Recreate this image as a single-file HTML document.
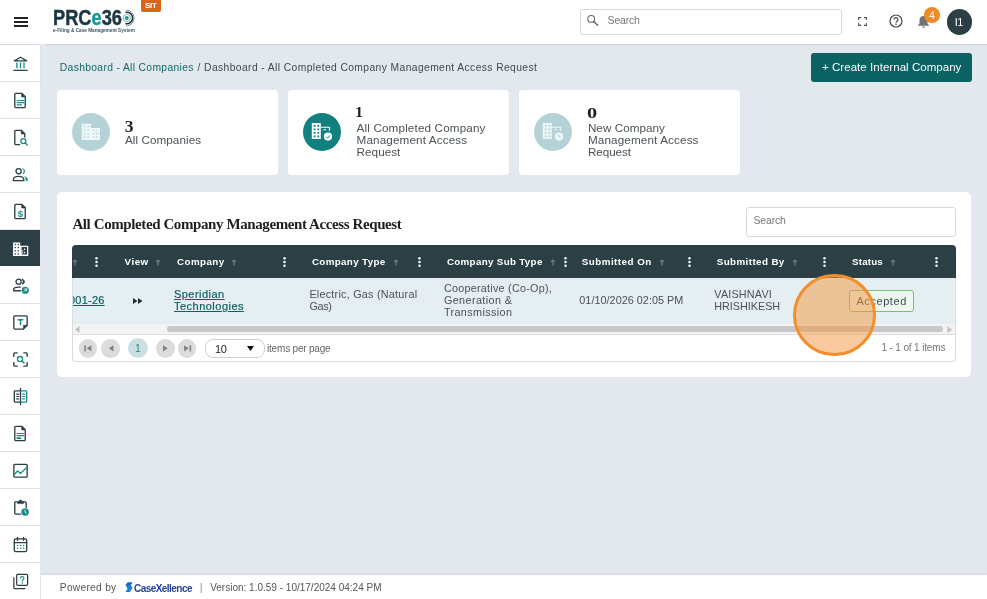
<!DOCTYPE html>
<html lang="en">
<head>
<meta charset="utf-8">
<title>Dashboard - All Completed Company Management Access Request</title>
<style>
*{box-sizing:border-box;margin:0;padding:0}
body{will-change:transform}
html,body{width:987px;height:599px;overflow:hidden;background:#e3e8ef;font-family:"Liberation Sans",Arial,sans-serif;color:#3d4a4f}
.abs{position:absolute}
.t{position:absolute;white-space:nowrap;line-height:1}
#topbar{position:absolute;left:0;top:0;width:987px;height:44px;background:#fff;box-shadow:0 1px 1px rgba(100,115,130,.18)}
#side{position:absolute;left:0;top:44px;width:40px;height:556px;background:#fff;border-top:1px solid #d4d7d9}
#strip{position:absolute;left:40px;top:44px;width:5px;height:45px;background:linear-gradient(90deg,#dfe4eb,#e9edf2)}
#side .it{position:absolute;left:0;width:40px;height:37px;border-bottom:1px solid #dfe3e6}
#side .it.act{background:#2c3f45;border-bottom:none;height:36px}
#side svg{position:absolute;left:10.5px;top:9px;width:19px;height:19px}
#footer{position:absolute;left:41px;top:575px;width:946px;height:24px;background:#fff;box-shadow:0 -1px 2px rgba(100,115,130,.15)}
.card{position:absolute;top:90px;width:221px;height:84.5px;background:#fff;border-radius:4px}
.circ{position:absolute;left:15px;top:22.5px;width:38px;height:38px;border-radius:50%}
.num{font-family:"Liberation Serif","DejaVu Serif",serif;font-weight:bold;color:#1f1f1f}
#panel{position:absolute;left:57px;top:192px;width:914px;height:185px;background:#fff;border-radius:5px}
#grid{position:absolute;left:72px;top:244.5px;width:883.5px;height:117px;border-radius:4px;overflow:hidden;background:#fff}
#gborder{position:absolute;left:72px;top:278px;width:883.5px;height:83.5px;border:1px solid #d8dde0;border-top:none;border-radius:0 0 4px 4px}
#ghead{position:absolute;left:0;top:0;width:884px;height:33.5px;background:#2c3f45}
#grow{position:absolute;left:0;top:33.5px;width:884px;height:45.5px;background:#e5eef1}
.hd{color:#fff;font-weight:bold;font-size:10px;letter-spacing:.22px}
.cell{font-size:11.5px;color:#4a5458}
a{color:inherit}
</style>
</head>
<body>
<div id="topbar">
<div class="abs" style="left:14px;top:17px;width:14px;height:2px;background:#222"></div>
<div class="abs" style="left:14px;top:21px;width:14px;height:2px;background:#222"></div>
<div class="abs" style="left:14px;top:25px;width:14px;height:2px;background:#222"></div>
<span class="t m" id="logo" style="left:52.700px;top:7.200px;font-size:21.600px;font-weight:bold;letter-spacing:0;color:#1b3640;-webkit-text-stroke:.45px #1b3640;transform:scaleX(0.845);transform-origin:0 0">PRC<span style="color:#1a9a96;-webkit-text-stroke:.45px #1a9a96">e</span>36</span>
<svg class="abs" style="left:117.800px;top:8.800px" width="18" height="18" viewBox="0 0 18 18"><path d="M8.100 1A8 8 0 0 1 8.100 17" fill="none" stroke="#5d737a" stroke-width=".8"/><path d="M7.300 3.400A5.800 5.800 0 1 1 7.300 14.600" fill="none" stroke="#1b3640" stroke-width="1.500"/><circle cx="8.800" cy="9" r="3.600" fill="none" stroke="#6d8187" stroke-width=".7"/><circle cx="8.800" cy="9" r="2" fill="#1a9a96"/></svg>
<span class="t m" id="logosub" style="left:53px;top:29px;font-size:4.7px;font-weight:bold;color:#3a5662">e-Filing &amp; Case Management System</span>
<div class="abs" style="left:141px;top:0;width:20px;height:11.500px;background:#d9651d;border-radius:0 0 2px 2px"></div>
<span class="t m" id="sit" style="left:145px;top:1.5px;font-size:8px;font-weight:bold;color:#fff;letter-spacing:-0.3px">SIT</span>
<div class="abs" style="left:580px;top:9px;width:262px;height:25.500px;border:1px solid #d8d8d8;border-radius:3px;background:#fff"></div>
<svg class="abs" style="left:586px;top:14px" width="13" height="13" viewBox="0 0 13 13"><circle cx="5.200" cy="4.900" r="3.400" fill="none" stroke="#666" stroke-width="1.100"/><path d="M7.700 7.500L11.700 11.300" stroke="#666" stroke-width="1.400" stroke-linecap="round"/></svg>
<span class="t m " id="srch1" style="left:607.60px;top:15.00px;font-size:10.5px;letter-spacing:-0.214px;color:#777">Search</span>
<svg class="abs" style="left:858px;top:17px" width="9" height="9" viewBox="0 0 9 9"><path d="M.6 3V.6H3M6 .6H8.400V3M8.400 6V8.400H6M3 8.400H.6V6" fill="none" stroke="#555" stroke-width="1.100"/></svg>
<svg class="abs" style="left:889px;top:13.500px" width="14" height="14" viewBox="0 0 14 14"><circle cx="7" cy="7" r="6" fill="none" stroke="#444" stroke-width="1.200"/><path d="M5 5.600a2 2 0 1 1 3 1.700c-.7.400-1 .800-1 1.500" fill="none" stroke="#444" stroke-width="1.200"/><circle cx="7" cy="10.300" r=".8" fill="#444"/></svg>
<svg class="abs" style="left:917px;top:15px" width="13" height="14" viewBox="0 0 13 14"><path d="M6.500 1c-2.500 0-4 1.900-4 4.200v3.300l-1.500 1.700v.6h11v-.6l-1.500-1.700v-3.300c0-2.300-1.500-4.200-4-4.200z" fill="#70757a"/><path d="M5.200 11.600a1.300 1.300 0 0 0 2.600 0z" fill="#70757a"/></svg>
<div class="abs" style="left:924.400px;top:7px;width:16px;height:16px;border-radius:50%;background:#f08a24"></div>
<span class="t m " id="bn" style="left:929.30px;top:11.00px;font-size:10px;letter-spacing:-0.062px;color:#fff">4</span>
<div class="abs" style="left:946.500px;top:9px;width:25.500px;height:25.500px;border-radius:50%;background:#2c3f45"></div>
<span class="t m " id="av" style="left:954.80px;top:17.00px;font-size:11px;letter-spacing:-0.594px;color:#fff">I1</span>
</div>
<div id="strip"></div>
<div id="side">
<div class="it" style="top:0px"><svg viewBox="0 0 20 20" fill="none" stroke-linecap="round" stroke-linejoin="round"><path d="M3.500 7.200L10 3.500l6.500 3.700z" stroke="#2c3f45" stroke-width="1.300"/><path d="M6.300 9.500v5M10 9.500v5M13.700 9.500v5" stroke="#1a8a86" stroke-width="1.400"/><path d="M3 17.200h14" stroke="#2c3f45" stroke-width="1.400"/></svg></div>
<div class="it" style="top:37px"><svg viewBox="0 0 20 20" fill="none" stroke-linecap="round" stroke-linejoin="round"><path d="M5 2.500h6.500l3.500 3.500v10.500a1 1 0 0 1-1 1h-9a1 1 0 0 1-1-1v-13a1 1 0 0 1 1-1z" stroke="#2c3f45" stroke-width="1.400"/><path d="M11.300 2.700v3.500h3.500z" fill="#2c3f45" stroke="#2c3f45" stroke-width=".8"/><path d="M6.500 10h7M6.500 12.300h7M6.500 14.600h4.500" stroke="#1a8a86" stroke-width="1.300"/></svg></div>
<div class="it" style="top:74px"><svg viewBox="0 0 20 20" fill="none" stroke-linecap="round" stroke-linejoin="round"><path d="M9 17.500h-4a1 1 0 0 1-1-1v-13a1 1 0 0 1 1-1h6l3.500 3.500v3.500" stroke="#2c3f45" stroke-width="1.400"/><path d="M10.800 2.700v3.500h3.500z" fill="#2c3f45" stroke="#2c3f45" stroke-width=".8"/><circle cx="13" cy="13.800" r="2.600" stroke="#1a8a86" stroke-width="1.400"/><path d="M15 15.800l2 2" stroke="#1a8a86" stroke-width="1.500"/></svg></div>
<div class="it" style="top:111px"><svg viewBox="0 0 20 20" fill="none" stroke-linecap="round" stroke-linejoin="round"><circle cx="8" cy="6.500" r="2.700" stroke="#2c3f45" stroke-width="1.400"/><path d="M2.500 16.500v-1.200c0-2 2.500-3.300 5.500-3.300s5.500 1.300 5.500 3.300v1.200z" stroke="#2c3f45" stroke-width="1.400"/><path d="M12.500 3.800a2.800 2.800 0 0 1 0 5.400a4 4 0 0 0 0-5.400zM14.800 12.300c1.600.6 2.700 1.600 2.700 3v1.200h-1.800v-1.200c0-1.200-.4-2.200-.9-3z" fill="#1a8a86" stroke="#1a8a86" stroke-width=".5"/></svg></div>
<div class="it" style="top:148px"><svg viewBox="0 0 20 20" fill="none" stroke-linecap="round" stroke-linejoin="round"><path d="M5 2.500h6.500l3.500 3.500v10.500a1 1 0 0 1-1 1h-9a1 1 0 0 1-1-1v-13a1 1 0 0 1 1-1z" stroke="#2c3f45" stroke-width="1.400"/><path d="M11.300 2.700v3.500h3.500z" fill="#2c3f45" stroke="#2c3f45" stroke-width=".8"/><text x="9.800" y="15.800" font-family="Liberation Sans,sans-serif" font-size="10" font-weight="bold" fill="#1a8a86" text-anchor="middle">$</text></svg></div>
<div class="it act" style="top:185px"><svg viewBox="0 0 20 20" fill="none" stroke-linecap="round" stroke-linejoin="round"><path d="M2.200 3.700h7.500v3.500h8.500v10.700H2.200z" fill="#fff"/><path d="M11.100 8.500h5.800v7.800h-5.800z" fill="#2c3f45"/><rect x="3.8" y="5.1" width="1.400" height="1.400" fill="#2c3f45"/><rect x="3.8" y="8.3" width="1.400" height="1.400" fill="#2c3f45"/><rect x="3.8" y="11.7" width="1.400" height="1.400" fill="#2c3f45"/><rect x="3.8" y="15.1" width="1.400" height="1.400" fill="#2c3f45"/><rect x="7.0" y="5.1" width="1.400" height="1.400" fill="#2c3f45"/><rect x="7.0" y="8.3" width="1.400" height="1.400" fill="#2c3f45"/><rect x="7.0" y="11.7" width="1.400" height="1.400" fill="#2c3f45"/><rect x="7.0" y="15.1" width="1.400" height="1.400" fill="#2c3f45"/><rect x="13.600" y="10.100" width="1.400" height="1.400" fill="#fff"/><rect x="13.600" y="13.500" width="1.400" height="1.400" fill="#fff"/><path d="M9.700 12.400h3.200M9.700 14.700h3.200" stroke="#fff" stroke-width="1" stroke-linecap="butt"/></svg></div>
<div class="it" style="top:222px"><svg viewBox="0 0 20 20" fill="none" stroke-linecap="round" stroke-linejoin="round"><circle cx="8" cy="6" r="2.700" stroke="#2c3f45" stroke-width="1.400"/><path d="M12 3.300a2.800 2.800 0 0 1 0 5.400a4.500 4.500 0 0 0 0-5.400z" fill="#2c3f45" stroke="#2c3f45" stroke-width="1"/><path d="M10 15.500H2.800v-1c0-1.700 2.200-2.800 5.200-2.800c.6 0 1.200 0 1.700.100" stroke="#2c3f45" stroke-width="1.400"/><circle cx="15" cy="15" r="3.800" fill="#1a8a86"/><path d="M13.600 16.400l2.700-2.700m-1.800-.1h1.900v1.900" stroke="#fff" stroke-width=".9"/></svg></div>
<div class="it" style="top:259px"><svg viewBox="0 0 20 20" fill="none" stroke-linecap="round" stroke-linejoin="round"><path d="M4 3h12a1 1 0 0 1 1 1v9l-4 4H4a1 1 0 0 1-1-1V4a1 1 0 0 1 1-1z" stroke="#2c3f45" stroke-width="1.400"/><path d="M17 13h-4v4z" fill="#2c3f45" stroke="#2c3f45" stroke-width=".6"/><path d="M7 7h6M10 7v6" stroke="#1a8a86" stroke-width="1.600" stroke-linecap="butt"/></svg></div>
<div class="it" style="top:296px"><svg viewBox="0 0 20 20" fill="none" stroke-linecap="round" stroke-linejoin="round"><path d="M3 6.500V4a1 1 0 0 1 1-1h2.500M13.500 3H16a1 1 0 0 1 1 1v2.500M17 13.500V16a1 1 0 0 1-1 1h-2.500M6.500 17H4a1 1 0 0 1-1-1v-2.500" stroke="#2c3f45" stroke-width="1.500"/><circle cx="9.500" cy="9.500" r="2.700" stroke="#1a8a86" stroke-width="1.400"/><path d="M11.600 11.600l2.200 2.200" stroke="#1a8a86" stroke-width="1.500"/></svg></div>
<div class="it" style="top:333px"><svg viewBox="0 0 20 20" fill="none" stroke-linecap="round" stroke-linejoin="round"><path d="M10 1.500v17" stroke="#2c3f45" stroke-width="1.400"/><path d="M10 4H4.500a1 1 0 0 0-1 1v10a1 1 0 0 0 1 1H10" stroke="#2c3f45" stroke-width="1.400"/><path d="M6 7.500h2M6 10h2M6 12.500h2" stroke="#2c3f45" stroke-width="1.200"/><path d="M10 4h5.500a1 1 0 0 1 1 1v10a1 1 0 0 1-1 1H10" stroke="#1a8a86" stroke-width="1.400"/><path d="M12.300 7.500h2M12.300 10h2M12.300 12.500h2" stroke="#1a8a86" stroke-width="1.200"/></svg></div>
<div class="it" style="top:370px"><svg viewBox="0 0 20 20" fill="none" stroke-linecap="round" stroke-linejoin="round"><path d="M5 2.500h6.500l3.500 3.500v10.500a1 1 0 0 1-1 1h-9a1 1 0 0 1-1-1v-13a1 1 0 0 1 1-1z" stroke="#2c3f45" stroke-width="1.400"/><path d="M11.300 2.700v3.500h3.500z" fill="#2c3f45" stroke="#2c3f45" stroke-width=".8"/><path d="M6.500 10h7M6.500 12.300h7" stroke="#1a8a86" stroke-width="1.300"/><path d="M6.500 14.800h3.500" stroke="#1a8a86" stroke-width="1.800"/></svg></div>
<div class="it" style="top:407px"><svg viewBox="0 0 20 20" fill="none" stroke-linecap="round" stroke-linejoin="round"><rect x="3" y="3.500" width="14" height="13.500" rx="1" stroke="#2c3f45" stroke-width="1.400"/><path d="M3.300 14.200L7 10.500l3 2.700l6.500-6.500" stroke="#1a8a86" stroke-width="1.400"/></svg></div>
<div class="it" style="top:444px"><svg viewBox="0 0 20 20" fill="none" stroke-linecap="round" stroke-linejoin="round"><path d="M10 17H5a1 1 0 0 1-1-1V5a1 1 0 0 1 1-1h2M13 4h2a1 1 0 0 1 1 1v5" stroke="#2c3f45" stroke-width="1.400"/><path d="M7 5.500V4l1.500-.3a1.500 1.500 0 0 1 3 0L13 4v1.500z" fill="#2c3f45" stroke="#2c3f45" stroke-width=".8"/><circle cx="14.800" cy="14.800" r="4" fill="#1a8a86"/><path d="M14.800 12.800v2.200l1.300.9" stroke="#fff" stroke-width=".9"/></svg></div>
<div class="it" style="top:481px"><svg viewBox="0 0 20 20" fill="none" stroke-linecap="round" stroke-linejoin="round"><rect x="3.500" y="4" width="13" height="13.500" rx="1.500" stroke="#2c3f45" stroke-width="1.400"/><path d="M3.500 8h13" stroke="#2c3f45" stroke-width="1.400"/><path d="M6.800 2.500v3M13.200 2.500v3" stroke="#2c3f45" stroke-width="1.500"/><path d="M6.800 11h.1M10 11h.1M13.200 11h.1M6.800 14h.1M10 14h.1M13.200 14h.1" stroke="#1a8a86" stroke-width="1.600"/></svg></div>
<div class="it" style="top:518px"><svg viewBox="0 0 20 20" fill="none" stroke-linecap="round" stroke-linejoin="round"><rect x="6" y="2.500" width="11.500" height="11.500" rx="1" stroke="#2c3f45" stroke-width="1.300"/><path d="M3 6v10.500a1 1 0 0 0 1 1h10.500" stroke="#2c3f45" stroke-width="1.300"/><path d="M10 6.600a1.800 1.800 0 1 1 2.600 1.600c-.6.300-.8.700-.8 1.300" stroke="#1a8a86" stroke-width="1.200"/><circle cx="11.800" cy="11.600" r=".8" fill="#1a8a86"/></svg></div>
</div>
<div id="main">
<span class="t m " id="bc1" style="left:59.80px;top:63.00px;font-size:10.3px;letter-spacing:0.346px;color:#0f6a6a">Dashboard - All Companies</span>
<span class="t m " id="bc2" style="left:197.60px;top:63.00px;font-size:10.3px;letter-spacing:0.399px;color:#3d4a4f">/ Dashboard - All Completed Company Management Access Request</span>
<div class="abs" style="left:811px;top:53px;width:161px;height:29px;background:#0b6262;border-radius:3px"></div>
<span class="t m " id="btn" style="left:822.00px;top:62.00px;font-size:11.5px;letter-spacing:0.040px;color:#fff">+ Create Internal Company</span>

<div class="card" style="left:57px"><div class="circ" style="background:#b5d3d6"><svg class="abs" style="left:0;top:0" width="38" height="38" viewBox="0 0 38 38"><path d="M9.800 10.800h9.200v4.200h8.900v11.900H9.800z" fill="#eef7f7"/><rect x="11.90" y="12.70" width="1.4" height="1.4" fill="#b5d3d6"/><rect x="11.90" y="16.20" width="1.4" height="1.4" fill="#b5d3d6"/><rect x="11.90" y="19.90" width="1.4" height="1.4" fill="#b5d3d6"/><rect x="11.90" y="23.50" width="1.4" height="1.4" fill="#b5d3d6"/><rect x="15.60" y="12.70" width="1.4" height="1.4" fill="#b5d3d6"/><rect x="15.60" y="16.20" width="1.4" height="1.4" fill="#b5d3d6"/><rect x="15.60" y="19.90" width="1.4" height="1.4" fill="#b5d3d6"/><rect x="15.60" y="23.50" width="1.4" height="1.4" fill="#b5d3d6"/><rect x="20.95" y="16.95" width="1.3" height="1.3" fill="#b5d3d6"/><rect x="20.95" y="19.95" width="1.3" height="1.3" fill="#b5d3d6"/><rect x="20.95" y="22.95" width="1.3" height="1.3" fill="#b5d3d6"/><rect x="23.75" y="16.95" width="1.3" height="1.3" fill="#b5d3d6"/><rect x="23.75" y="19.95" width="1.3" height="1.3" fill="#b5d3d6"/><rect x="23.75" y="22.95" width="1.3" height="1.3" fill="#b5d3d6"/><rect x="25.800" y="19.800" width="1.100" height="1.100" fill="#b5d3d6"/></svg></div>
<span class="t num m" id="n1" style="left:67.800px;top:27.800px;font-size:17.500px">3</span>
<span class="t m " id="c1" style="left:68.00px;top:44.00px;font-size:11.7px;letter-spacing:0.057px;color:#4a5257">All Companies</span></div>

<div class="card" style="left:288px"><div class="circ" style="background:#138080"><svg class="abs" style="left:0;top:0" width="38" height="38" viewBox="0 0 38 38"><path d="M8.800 10h9v16h-9z" fill="#fff"/><rect x="10.70" y="12.00" width="1.8" height="1.8" fill="#138080"/><rect x="10.70" y="15.50" width="1.8" height="1.8" fill="#138080"/><rect x="10.70" y="19.00" width="1.8" height="1.8" fill="#138080"/><rect x="10.70" y="22.50" width="1.8" height="1.8" fill="#138080"/><rect x="14.40" y="12.00" width="1.8" height="1.8" fill="#138080"/><rect x="14.40" y="15.50" width="1.8" height="1.8" fill="#138080"/><rect x="14.40" y="19.00" width="1.8" height="1.8" fill="#138080"/><rect x="14.40" y="22.50" width="1.8" height="1.8" fill="#138080"/><path d="M17.800 14.300h8.700v3.400M20.400 16.800h2.800" fill="none" stroke="#fff" stroke-width="1.100"/><circle cx="25" cy="23.600" r="5" fill="#138080"/><circle cx="25" cy="23.600" r="4.100" fill="#fff"/><path d="M23.100 23.700l1.400 1.400l2.500-2.600" fill="none" stroke="#138080" stroke-width="1"/></svg></div>
<span class="t num m" id="n2" style="left:67.300px;top:16px;font-size:14px;transform:scaleX(1.15);transform-origin:0 0">1</span>
<span class="t m " id="c2a" style="left:68.60px;top:32.00px;font-size:11.7px;letter-spacing:0.141px;color:#4a5257">All Completed Company</span>
<span class="t m " id="c2b" style="left:68.60px;top:44.00px;font-size:11.7px;letter-spacing:0.129px;color:#4a5257">Management Access</span>
<span class="t m " id="c2c" style="left:68.60px;top:56.00px;font-size:11.7px;letter-spacing:0.036px;color:#4a5257">Request</span></div>

<div class="card" style="left:519px"><div class="circ" style="background:#b5d3d6"><svg class="abs" style="left:0;top:0" width="38" height="38" viewBox="0 0 38 38"><path d="M8.800 10h9v16h-9z" fill="#eef7f7"/><rect x="10.70" y="12.00" width="1.8" height="1.8" fill="#b5d3d6"/><rect x="10.70" y="15.50" width="1.8" height="1.8" fill="#b5d3d6"/><rect x="10.70" y="19.00" width="1.8" height="1.8" fill="#b5d3d6"/><rect x="10.70" y="22.50" width="1.8" height="1.8" fill="#b5d3d6"/><rect x="14.40" y="12.00" width="1.8" height="1.8" fill="#b5d3d6"/><rect x="14.40" y="15.50" width="1.8" height="1.8" fill="#b5d3d6"/><rect x="14.40" y="19.00" width="1.8" height="1.8" fill="#b5d3d6"/><rect x="14.40" y="22.50" width="1.8" height="1.8" fill="#b5d3d6"/><path d="M17.800 14.300h8.700v3.400M20.400 16.800h2.800" fill="none" stroke="#eef7f7" stroke-width="1.100"/><circle cx="25" cy="23.600" r="5" fill="#b5d3d6"/><circle cx="25" cy="23.600" r="4.100" fill="#eef7f7"/><path d="M24.300 21.300l.9 2.600l1.600 1.200" fill="none" stroke="#b5d3d6" stroke-width="1"/></svg></div>
<span class="t num m" id="n3" style="left:68.300px;top:15.700px;font-size:14.500px;transform:scaleX(1.4);transform-origin:0 0">0</span>
<span class="t m " id="c3a" style="left:68.90px;top:32.00px;font-size:11.7px;letter-spacing:0.040px;color:#4a5257">New Company</span>
<span class="t m " id="c3b" style="left:68.90px;top:44.00px;font-size:11.7px;letter-spacing:0.129px;color:#4a5257">Management Access</span>
<span class="t m " id="c3c" style="left:68.90px;top:56.00px;font-size:11.7px;letter-spacing:-0.064px;color:#4a5257">Request</span></div>

<div id="panel"></div>
<span class="t m " id="ttl" style="left:72.40px;top:217.00px;font-size:15px;letter-spacing:-0.402px;font-weight:bold;font-family:'Liberation Serif','DejaVu Serif',serif;color:#1f1f1f">All Completed Company Management Access Request</span>
<div class="abs" style="left:746px;top:207px;width:210px;height:29.500px;border:1px solid #d8d8d8;border-radius:3px;background:#fff"></div>
<span class="t m " id="srch2" style="left:753.40px;top:215.00px;font-size:10.5px;letter-spacing:-0.147px;color:#777">Search</span>
<div id="grid">
<div id="ghead">
<span class="t m " id="h0" style="left:52.60px;top:12.50px;font-size:9.8px;letter-spacing:0.486px;color:#fff;font-weight:bold">View</span>
<span class="t m " id="h1" style="left:105.00px;top:12.50px;font-size:9.8px;letter-spacing:0.423px;color:#fff;font-weight:bold">Company</span>
<span class="t m " id="h2" style="left:239.90px;top:12.50px;font-size:9.8px;letter-spacing:0.350px;color:#fff;font-weight:bold">Company Type</span>
<span class="t m " id="h3" style="left:374.90px;top:12.50px;font-size:9.8px;letter-spacing:0.317px;color:#fff;font-weight:bold">Company Sub Type</span>
<span class="t m " id="h4" style="left:509.80px;top:12.50px;font-size:9.8px;letter-spacing:0.472px;color:#fff;font-weight:bold">Submitted On</span>
<span class="t m " id="h5" style="left:644.80px;top:12.50px;font-size:9.8px;letter-spacing:0.397px;color:#fff;font-weight:bold">Submitted By</span>
<span class="t m " id="h6" style="left:780.00px;top:12.50px;font-size:9.8px;letter-spacing:0.174px;color:#fff;font-weight:bold">Status</span>
<svg class="abs" style="left:0.0px;top:14.3px" width="6" height="7" viewBox="0 0 6 7"><path d="M3 6.500V1M.9 3L3 .8l2.100 2.200" fill="none" stroke="#7f9197" stroke-width="1"/></svg><svg class="abs" style="left:83.3px;top:14.3px" width="6" height="7" viewBox="0 0 6 7"><path d="M3 6.500V1M.9 3L3 .8l2.100 2.200" fill="none" stroke="#7f9197" stroke-width="1"/></svg><svg class="abs" style="left:159.0px;top:14.3px" width="6" height="7" viewBox="0 0 6 7"><path d="M3 6.500V1M.9 3L3 .8l2.100 2.200" fill="none" stroke="#7f9197" stroke-width="1"/></svg><svg class="abs" style="left:320.7px;top:14.3px" width="6" height="7" viewBox="0 0 6 7"><path d="M3 6.500V1M.9 3L3 .8l2.100 2.200" fill="none" stroke="#7f9197" stroke-width="1"/></svg><svg class="abs" style="left:477.7px;top:14.3px" width="6" height="7" viewBox="0 0 6 7"><path d="M3 6.500V1M.9 3L3 .8l2.100 2.200" fill="none" stroke="#7f9197" stroke-width="1"/></svg><svg class="abs" style="left:586.8px;top:14.3px" width="6" height="7" viewBox="0 0 6 7"><path d="M3 6.500V1M.9 3L3 .8l2.100 2.200" fill="none" stroke="#7f9197" stroke-width="1"/></svg><svg class="abs" style="left:719.8px;top:14.3px" width="6" height="7" viewBox="0 0 6 7"><path d="M3 6.500V1M.9 3L3 .8l2.100 2.200" fill="none" stroke="#7f9197" stroke-width="1"/></svg><svg class="abs" style="left:817.8px;top:14.3px" width="6" height="7" viewBox="0 0 6 7"><path d="M3 6.500V1M.9 3L3 .8l2.100 2.200" fill="none" stroke="#7f9197" stroke-width="1"/></svg><svg class="abs" style="left:23.2px;top:12.7px" width="3" height="10" viewBox="0 0 3 10"><circle cx="1.500" cy="1.300" r="1.250" fill="#fff"/><circle cx="1.500" cy="5" r="1.250" fill="#fff"/><circle cx="1.500" cy="8.700" r="1.250" fill="#fff"/></svg><svg class="abs" style="left:211.2px;top:12.7px" width="3" height="10" viewBox="0 0 3 10"><circle cx="1.500" cy="1.300" r="1.250" fill="#fff"/><circle cx="1.500" cy="5" r="1.250" fill="#fff"/><circle cx="1.500" cy="8.700" r="1.250" fill="#fff"/></svg><svg class="abs" style="left:346.1px;top:12.7px" width="3" height="10" viewBox="0 0 3 10"><circle cx="1.500" cy="1.300" r="1.250" fill="#fff"/><circle cx="1.500" cy="5" r="1.250" fill="#fff"/><circle cx="1.500" cy="8.700" r="1.250" fill="#fff"/></svg><svg class="abs" style="left:491.8px;top:12.7px" width="3" height="10" viewBox="0 0 3 10"><circle cx="1.500" cy="1.300" r="1.250" fill="#fff"/><circle cx="1.500" cy="5" r="1.250" fill="#fff"/><circle cx="1.500" cy="8.700" r="1.250" fill="#fff"/></svg><svg class="abs" style="left:615.9px;top:12.7px" width="3" height="10" viewBox="0 0 3 10"><circle cx="1.500" cy="1.300" r="1.250" fill="#fff"/><circle cx="1.500" cy="5" r="1.250" fill="#fff"/><circle cx="1.500" cy="8.700" r="1.250" fill="#fff"/></svg><svg class="abs" style="left:751.0px;top:12.7px" width="3" height="10" viewBox="0 0 3 10"><circle cx="1.500" cy="1.300" r="1.250" fill="#fff"/><circle cx="1.500" cy="5" r="1.250" fill="#fff"/><circle cx="1.500" cy="8.700" r="1.250" fill="#fff"/></svg><svg class="abs" style="left:863.2px;top:12.7px" width="3" height="10" viewBox="0 0 3 10"><circle cx="1.500" cy="1.300" r="1.250" fill="#fff"/><circle cx="1.500" cy="5" r="1.250" fill="#fff"/><circle cx="1.500" cy="8.700" r="1.250" fill="#fff"/></svg></div>
<div class="abs" id="sbar" style="left:0;top:79.0px;width:886px;height:11px;background:#f3f3f3;border-bottom:1px solid #dcdfe1"></div>
<div class="abs" style="left:95px;top:81.5px;width:776px;height:6px;background:#c8c8c8;border-radius:3px"></div>
<svg class="abs" style="left:3px;top:81.0px" width="5" height="7" viewBox="0 0 5 7"><path d="M4.500 0L0 3.500L4.500 7z" fill="#c0c0c0"/></svg>
<svg class="abs" style="left:875px;top:81.0px" width="5" height="7" viewBox="0 0 5 7"><path d="M.5 0L5 3.500L.5 7z" fill="#c0c0c0"/></svg>
<div class="abs" style="left:6.95px;top:94.95px;width:18.500px;height:18.500px;border-radius:50%;background:#dcdcdc"><svg style="position:absolute;left:3.250px;top:3.050px" width="12.500" height="12.500" viewBox="0 0 10 10"><path d="M2.500 2.500v5" stroke="#808080" stroke-width="1.200"/><path d="M7.500 2.500L3.800 5l3.700 2.500z" fill="#808080"/></svg></div>
<div class="abs" style="left:29.25px;top:94.95px;width:18.500px;height:18.500px;border-radius:50%;background:#dcdcdc"><svg style="position:absolute;left:3.250px;top:3.050px" width="12.500" height="12.500" viewBox="0 0 10 10"><path d="M6.800 2.500L3 5l3.800 2.500z" fill="#808080"/></svg></div>
<div class="abs" style="left:55.9px;top:93.7px;width:20px;height:20px;border-radius:50%;background:#c9dfe2"></div><span class="t m " id="pg1" style="left:62.90px;top:98.50px;font-size:10.5px;letter-spacing:0.156px;color:#2f8585">1</span>
<div class="abs" style="left:84.15px;top:94.95px;width:18.500px;height:18.500px;border-radius:50%;background:#dcdcdc"><svg style="position:absolute;left:3.250px;top:3.050px" width="12.500" height="12.500" viewBox="0 0 10 10"><path d="M3.200 2.500L7 5L3.200 7.500z" fill="#808080"/></svg></div>
<div class="abs" style="left:105.65px;top:94.95px;width:18.500px;height:18.500px;border-radius:50%;background:#dcdcdc"><svg style="position:absolute;left:3.250px;top:3.050px" width="12.500" height="12.500" viewBox="0 0 10 10"><path d="M7.500 2.500v5" stroke="#808080" stroke-width="1.200"/><path d="M2.500 2.500L6.200 5L2.500 7.500z" fill="#808080"/></svg></div>
<div class="abs" style="left:133px;top:94.8px;width:59.500px;height:18.500px;border:1px solid #d0d0d0;border-radius:8px;background:#fff"></div><span class="t m " id="pp" style="left:143.00px;top:99.50px;font-size:11px;letter-spacing:-0.325px;color:#222">10</span><svg class="abs" style="left:174.5px;top:101.5px" width="7" height="5" viewBox="0 0 7 5"><path d="M0 0h7L3.500 5z" fill="#111"/></svg><span class="t m " id="ipp" style="left:195.00px;top:99.50px;font-size:10px;letter-spacing:-0.190px;color:#666">items per page</span><span class="t m " id="cnt" style="left:809.50px;top:98.50px;font-size:10px;letter-spacing:-0.146px;color:#777">1 - 1 of 1 items</span>
<div id="grow">
<span class="t m " id="r0" style="left:-9.40px;top:17.00px;font-size:11px;letter-spacing:0.232px;color:#0c6262;text-decoration:underline;-webkit-text-stroke:.2px #0c6262;">0001-26</span>
<svg class="abs" style="left:61px;top:19.8px" width="10" height="6" viewBox="0 0 10 6"><path d="M0 0l4.500 3L0 6zM5 0l4.500 3L5 6z" fill="#1f2f35"/></svg><span class="t m " id="r1a" style="left:102.00px;top:11.00px;font-size:11px;letter-spacing:0.457px;color:#0c6262;text-decoration:underline;-webkit-text-stroke:.2px #0c6262;">Speridian</span>
<span class="t m " id="r1b" style="left:102.00px;top:23.00px;font-size:11px;letter-spacing:0.482px;color:#0c6262;text-decoration:underline;-webkit-text-stroke:.2px #0c6262;">Technologies</span>
<span class="t m " id="r2a" style="left:237.40px;top:11.00px;font-size:10.8px;letter-spacing:0.240px;color:#4a5257">Electric, Gas (Natural</span>
<span class="t m " id="r2b" style="left:237.40px;top:23.00px;font-size:10.8px;letter-spacing:-0.277px;color:#4a5257">Gas)</span>
<span class="t m " id="r3a" style="left:371.90px;top:5.00px;font-size:10.8px;letter-spacing:0.244px;color:#4a5257">Cooperative (Co-Op),</span>
<span class="t m " id="r3b" style="left:371.90px;top:17.00px;font-size:10.8px;letter-spacing:0.398px;color:#4a5257">Generation &amp;</span>
<span class="t m " id="r3c" style="left:371.90px;top:29.00px;font-size:10.8px;letter-spacing:0.384px;color:#4a5257">Transmission</span>
<span class="t m " id="r4" style="left:507.30px;top:17.00px;font-size:10.8px;letter-spacing:0.044px;color:#4a5257">01/10/2026 02:05 PM</span>
<span class="t m " id="r5a" style="left:642.30px;top:11.00px;font-size:10.8px;letter-spacing:0.189px;color:#4a5257">VAISHNAVI</span>
<span class="t m " id="r5b" style="left:642.30px;top:23.00px;font-size:10.8px;letter-spacing:-0.020px;color:#4a5257">HRISHIKESH</span>
<div class="abs" style="left:777.4px;top:12.3px;width:64.500px;height:21.500px;border:1px solid #76c27a;border-radius:3px;background:#ecf7ed"></div><span class="t m " id="r6" style="left:784.40px;top:18.00px;font-size:11px;letter-spacing:0.578px;color:#3d4a4f">Accepted</span>
</div>
</div>
<div id="gborder"></div>
<div class="abs" id="click" style="left:793.300px;top:273.800px;width:82.500px;height:82.500px;border-radius:50%;background:rgba(244,150,62,.5);border:3px solid #f28e2c"></div>
</div>
<div id="footer">
<span class="t m " id="f1" style="left:18.80px;top:8.00px;font-size:10.2px;letter-spacing:0.289px;color:#555">Powered by</span>
<svg class="abs" style="left:83.500px;top:6.500px" width="9" height="11" viewBox="0 0 9 11"><path d="M2.600.6h4.800L5.800 3l1.700 2.900L4.900 10H.5l2-3.200L.5 3.300z" fill="#1e7fd8"/><path d="M2.600.6h4.800L5.800 3H.7z" fill="#1667be"/></svg>
<span class="t m" id="f2" style="left:93px;top:8.500px;font-size:10px;font-weight:bold;color:#27449a;letter-spacing:-.55px">Case<span style="color:#1a3cb8">X</span>ellence</span>
<span class="t m" id="f3" style="left:158.800px;top:7px;font-size:11px;color:#999">|</span>
<span class="t m " id="f4" style="left:169.20px;top:8.00px;font-size:10px;letter-spacing:0.002px;color:#555">Version: 1.0.59 - 10/17/2024 04:24 PM</span>
</div>
</body>
</html>
